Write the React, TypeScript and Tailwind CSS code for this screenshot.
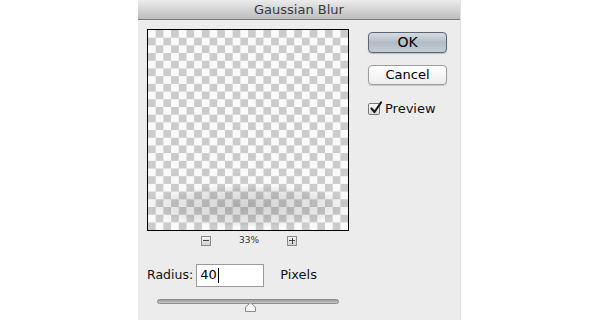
import React from 'react';

const font = { fontFamily: '"DejaVu Sans", "Liberation Sans", sans-serif' };

function ZoomBox({ plus }: { plus?: boolean }) {
  return (
    <span className="relative flex h-[10px] w-[10px] items-center justify-center border border-[#8a8a8a] bg-gradient-to-b from-[#f4f4f4] to-[#cfcfcf]">
      <span className="absolute h-px w-[6px] bg-[#444]" />
      {plus && <span className="absolute h-[6px] w-px bg-[#444]" />}
    </span>
  );
}

function App() {
  return (
    <div className="flex h-[320px] w-[600px] bg-white" style={font}>
      <div className="ml-[138px] flex h-[320px] w-[323px] flex-col bg-[#ececec] border-r border-[#e2e2e2]">
        <div className="flex h-[20px] items-center justify-center border-b border-[#7a7a7a] bg-gradient-to-b from-[#ececec] to-[#bdbdbd] text-[13px] text-[#3a3a3a]">
          Gaussian Blur
        </div>
        <div className="flex flex-1">
          <div className="flex flex-col pl-[9px] pt-[9px]">
            <div className="relative h-[202px] w-[202px] border border-black bg-white">
              <div className="absolute inset-0 bg-[conic-gradient(#cbcbcb_25%,#fafafa_0_50%,#cbcbcb_0_75%,#fafafa_0)] bg-[length:15.4px_15.4px]" />
              <div className="absolute inset-x-0 top-[156px] h-[40px] bg-[radial-gradient(ellipse_at_center,rgba(0,0,0,0.16),rgba(0,0,0,0.08)_55%,rgba(0,0,0,0)_75%)]" />
            </div>
            <div className="mt-[3px] flex items-center pl-[54px]">
              <ZoomBox />
              <span className="ml-[28px] text-[9px] text-[#333]">33%</span>
              <span className="ml-[28px]"><ZoomBox plus /></span>
            </div>
            <div className="mt-[16px] flex items-center">
              <span className="text-[12.5px] text-[#111]">Radius:</span>
              <div className="ml-[3px] flex h-[23px] w-[68px] items-center border border-[#9a9a9a] bg-white pl-[3px] text-[13px] text-black">
                40<span className="ml-px h-[15px] w-px bg-black" />
              </div>
              <span className="ml-[16px] text-[13px] text-[#111]">Pixels</span>
            </div>
            <div className="relative ml-[10px] mt-[12px] h-[5px] w-[182px] rounded-full border border-[#8c8c8c] bg-gradient-to-b from-[#9a9a9a] to-[#c8c8c8]">
              <svg className="absolute left-[86px] top-[2px]" width="13" height="10" viewBox="0 0 13 10">
                <path d="M1.5 9.5 V5 L6.5 0.8 L11.5 5 V9.5 Z" fill="#f6f6f6" stroke="#8a8a8a" strokeWidth="1" strokeLinejoin="round" />
              </svg>
            </div>
          </div>
          <div className="ml-[19px] flex flex-col pt-[12px]">
            <button type="button" className="flex h-[21px] w-[79px] items-center justify-center rounded-[4px] border border-[#5d6670] bg-gradient-to-b from-[#d6dce3] via-[#b3bcc6] to-[#c4ccd4] text-[14px] text-black shadow-[0_1px_1px_rgba(0,0,0,0.2)]">
              OK
            </button>
            <button type="button" className="mt-[12px] flex h-[20px] w-[79px] items-center justify-center rounded-[4px] border border-[#9c9c9c] bg-gradient-to-b from-white to-[#ededed] text-[13px] text-black shadow-[0_1px_1px_rgba(0,0,0,0.15)]">
              Cancel
            </button>
            <div className="mt-[14px] flex items-center">
              <span className="relative h-[12px] w-[12px] rounded-[2px] border border-[#777] bg-gradient-to-b from-white to-[#dcdcdc]">
                <svg className="absolute -top-[3px] left-0" width="14" height="14" viewBox="0 0 14 14">
                  <path d="M2.5 7.5 L5.5 11 L12 1.5" fill="none" stroke="#1c1c1c" strokeWidth="2.2" strokeLinecap="round" strokeLinejoin="round" />
                </svg>
              </span>
              <span className="ml-[5px] text-[13px] text-[#111]">Preview</span>
            </div>
          </div>
        </div>
      </div>
    </div>
  );
}

export default App;
